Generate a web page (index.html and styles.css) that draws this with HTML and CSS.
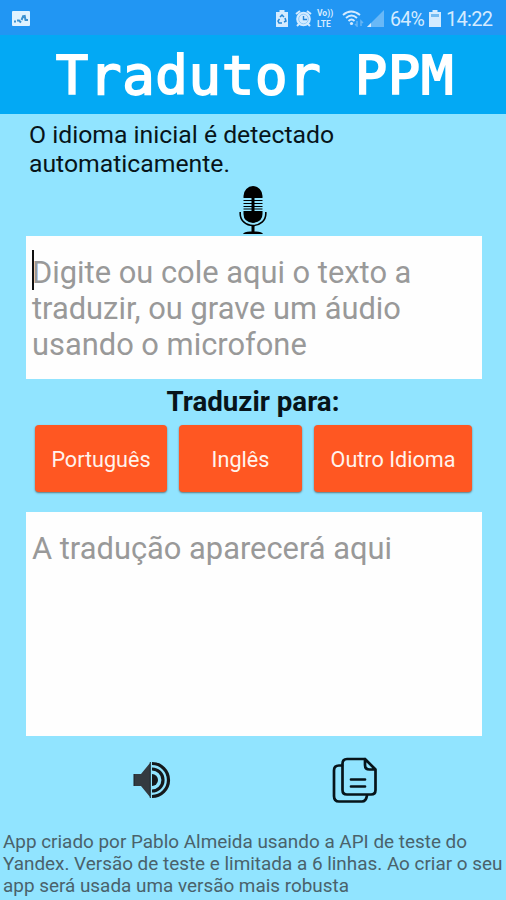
FILE: index.html
```html
<!DOCTYPE html>
<html lang="pt-BR">
<head>
<meta charset="utf-8">
<title>Tradutor PPM</title>
<link rel="stylesheet" href="styles.css">
</head>
<body>
<div class="app">
  <header class="status">
    <svg class="activity" width="18" height="15" viewBox="0 0 18 15"><rect width="18" height="15" rx="1" fill="#dff2ff"/><path d="M2 10.500h2M5 9.500h2l2 2M9.500 9l2-4.500M12.500 4l1 5h2.500" fill="none" stroke="#3b91d0" stroke-width="2"/></svg>
    <svg class="recycle" width="12" height="17" viewBox="0 0 12 17"><path d="M3.500 0h5v2H12v15H0V2h3.500z" fill="#d4ebff"/><path d="M4 7l2-2 2 2M9 8l1 3-2 1M6 13H3l-1-2 1.500-2" fill="none" stroke="#2589d9" stroke-width="1.500"/></svg>
    <svg class="alarm" width="17" height="17" viewBox="0 0 17 17"><circle cx="8.500" cy="9" r="7.300" fill="#d4ebff"/><path d="M1 4l4-3M12 1l4 3M4 14l-2 2M13 14l2 2" stroke="#d4ebff" stroke-width="2"/><circle cx="8.500" cy="9" r="4.800" fill="none" stroke="#80c0f5" stroke-width=".8"/><path d="M8.500 6v3.500H12" fill="none" stroke="#2688dc" stroke-width="1.400"/></svg>
    <div class="volte"><span>Vo))</span><span>LTE</span></div>
    <svg class="wifi" width="22" height="18" viewBox="0 0 22 18"><path d="M1 6q8-7 17 0M4 9q5.500-5 11 0M6.500 12q3-3 6 0" fill="none" stroke="#d4ebff" stroke-width="1.900"/><circle cx="9.500" cy="14.500" r="1.600" fill="#d4ebff"/><path d="M15 12v5l-2-2M19 17v-5l2 2" fill="none" stroke="#66b5f5" stroke-width="1.500"/></svg>
    <svg class="signal" width="17" height="18" viewBox="0 0 17 18"><path d="M0 18L17 1v17z" fill="#69b8f7"/><path d="M0 18l4-4v4z" fill="#d4ebff"/></svg>
    <span class="percent">64%</span>
    <svg class="battery" width="12" height="17" viewBox="0 0 12 17"><path d="M3.500 0h5v2H12v15H0V2h3.500z" fill="#d4ebff"/><path d="M2 4h8v3H2z" fill="#75bbf1"/></svg>
    <span class="clock">14:22</span>
  </header>
  <h1 class="title">Tradutor PPM</h1>
  <main class="content">
    <p class="intro">O idioma inicial é detectado<br>automaticamente.</p>
    <svg class="mic" width="28" height="50" viewBox="0 0 28 50"><path d="M4.500 13V11a9.500 10 0 0 1 19 0v2zM4.500 26h19v3q0 8-9.500 9-9.500-1-9.500-9z"/><path d="M14 12v15M14 41v7" stroke="#000" stroke-width="3"/><path d="M4.500 15.500h19M4.500 18.500h19M4.500 21.500h19M4.500 24h19" stroke="#000"/><path d="M1.200 27v2a12.800 11.500 0 0 0 25.600 0v-2" fill="none" stroke="#000" stroke-width="1.600"/><path d="M4 49q1-2.500 7-2.500h6q6 0 7 2.500z"/></svg>
    <div class="box source"><span class="caret"></span><span class="hint">Digite ou cole aqui o texto a<br>traduzir, ou grave um áudio<br>usando o microfone</span></div>
    <h2 class="subtitle">Traduzir para:</h2>
    <div class="buttons"><button>Português</button><button>Inglês</button><button>Outro Idioma</button></div>
    <div class="box result"><span class="hint">A tradução aparecerá aqui</span></div>
    <div class="actions">
      <svg width="38" height="40" viewBox="0 0 38 40"><path d="M1 14h7L17 3v34L8 26H1z" fill="#343a40"/><path d="M1 14v12M17.300 2v36" stroke="#182126"/><path d="M19 14a6 6 0 0 1 0 12z" fill="#15191c"/><path d="M19 9a11 11 0 0 1 0 22M19 3.500a16.500 16.500 0 0 1 0 33" fill="none" stroke="#15191c" stroke-width="3.200"/></svg>
      <svg width="46" height="48" viewBox="0 0 46 48"><g fill="none" stroke="#07141a" stroke-width="2.700" stroke-linecap="round" stroke-linejoin="round"><path d="M33 3H15q-4.500 0-4.500 5v26q0 4.500 4.500 4.500h24q4.500 0 4.500-4.500V13.500L33 3v6q0 4.500 4.500 4.500h6"/><path d="M10 9.500H7q-5 0-5 5V40q0 5.500 5 5.500h23q4 0 5-6M19 23.500h14M19 30.500h14"/></g></svg>
    </div>
    <footer class="credits"><span>App criado por Pablo Almeida usando a API de teste do</span><span>Yandex. Versão de teste e limitada a 6 linhas. Ao criar o seu</span><span>app será usada uma versão mais robusta</span></footer>
  </main>
</div>
</body>
</html>
```
FILE: styles.css
```css
* { box-sizing: border-box; }
body { margin: 0; font-family: Roboto, "Liberation Sans", sans-serif; }
.app { width: 506px; height: 900px; overflow: hidden; background: #91e4ff; display: flex; flex-direction: column; }
svg { display: block; flex: none; }
.status { height: 35px; flex: none; background: #2196f3; color: #d4ebff; display: flex; align-items: center; padding: 1px 14px 0 12px; }
.activity { margin-right: auto; }
.recycle { margin-right: 7px; }
.alarm { margin-right: 5px; }
.volte { width: 18px; margin-right: 7px; display: flex; flex-direction: column; gap: 1px; font-size: 8.500px; line-height: 10px; font-weight: 700; }
.wifi { margin-right: 3px; }
.signal { margin-right: 6px; }
.percent { width: 34px; font-size: 19.500px; letter-spacing: -.7px; margin-right: 5px; padding-top: 2px; white-space: nowrap; }
.battery { margin-right: 5px; }
.clock { width: 46px; font-size: 20px; letter-spacing: -.7px; padding-top: 2px; }
.title { margin: 0; height: 79px; flex: none; background: #03a9f4; color: #fff; text-align: center; font: 400 54px/82px "DejaVu Sans Mono", monospace; letter-spacing: .7px; padding-left: 4px; -webkit-text-stroke: 1.800px #fff; white-space: nowrap; }
.content { flex: 1; display: flex; flex-direction: column; min-height: 0; }
.intro { margin: 6px 0 0 29px; font-size: 24.750px; line-height: 29px; height: 58px; color: #07141a; }
.mic { margin: 7px 0 0 239px; }
.box { margin: 0 24px 0 26px; background: #fefefe; color: #999; font-size: 30.850px; line-height: 36.200px; }
.source { height: 143px; margin-top: 1px; padding: 19px 0 0 6px; position: relative; }
.hint { display: block; white-space: nowrap; }
.caret { position: absolute; left: 6px; top: 14px; width: 2px; height: 40px; background: #111; }
.subtitle { margin: 5px 0 0; height: 35px; text-align: center; font-size: 27.700px; line-height: 36px; font-weight: 700; color: #07141a; }
.buttons { display: grid; grid-template-columns: 132px 123px 158px; gap: 12px; margin: 6px 0 0 35px; }
button { height: 67px; padding: 1px 0 0; border: 0; border-radius: 4px; background: #ff5722; color: #fff3ed; font: 21.600px Roboto, sans-serif; box-shadow: 0 1px 2px #61767c; white-space: nowrap; }
.result { height: 224px; margin-top: 20px; padding: 19px 0 0 6px; }
.actions { display: flex; align-items: center; gap: 161px; height: 48px; margin: 20px 0 0 133px; }
.credits { margin: 27px 0 0 3px; display: flex; flex-direction: column; font-size: 18.900px; line-height: 22.200px; color: #4a626b; white-space: nowrap; }
```
